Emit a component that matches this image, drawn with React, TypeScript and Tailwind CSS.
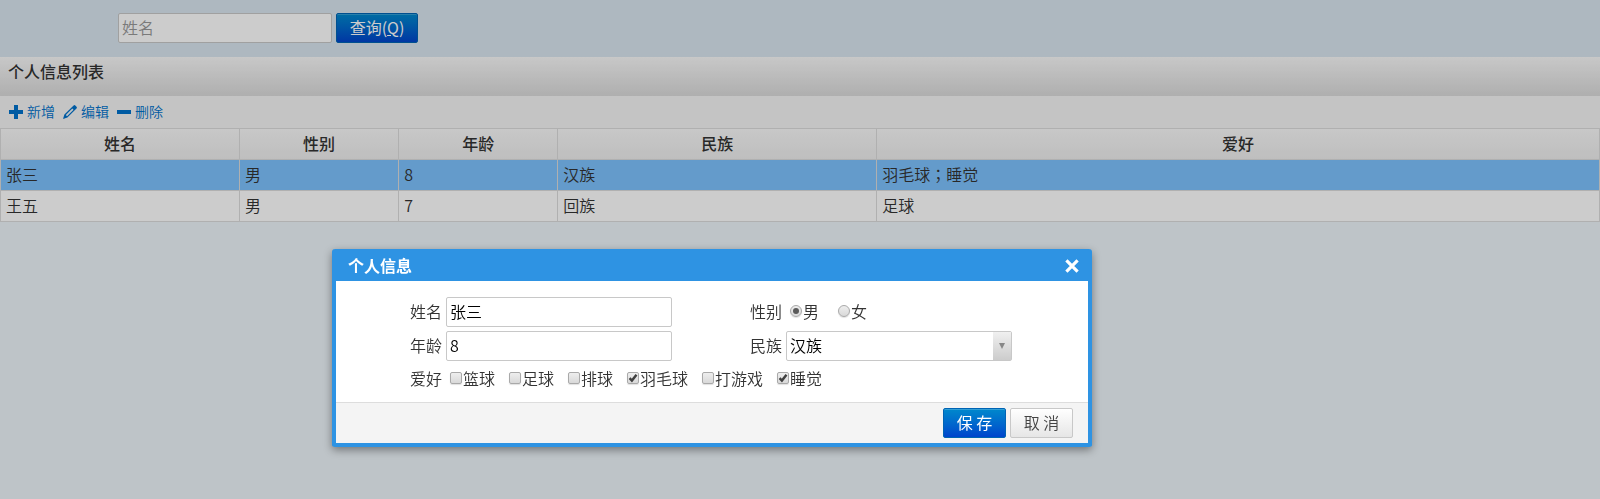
import { Fragment, useState } from "react";
import type { ReactNode } from "react";

type Person = {
  name: string;
  gender: string;
  age: number;
  nation: string;
  hobbies: string[];
};

const people: Person[] = [
  { name: "张三", gender: "男", age: 8, nation: "汉族", hobbies: ["羽毛球", "睡觉"] },
  { name: "王五", gender: "男", age: 7, nation: "回族", hobbies: ["足球"] },
];

const hobbyOptions = ["篮球", "足球", "排球", "羽毛球", "打游戏", "睡觉"];

const columns = [
  { title: "姓名", width: "w-[14.95%]" },
  { title: "性别", width: "w-[9.95%]" },
  { title: "年龄", width: "w-[9.95%]" },
  { title: "民族", width: "w-[19.95%]" },
  { title: "爱好", width: "w-auto" },
];

const fieldClass =
  "h-[30px] w-full rounded-[2px] border border-[#c8c8c8] bg-white px-[3px] pb-0.5 text-base text-black outline-none";

const primaryClass =
  "h-[30px] rounded-[2px] border border-[#0064b4] bg-linear-to-b from-[#0088cc] to-[#0044cc] pb-0.5 text-base leading-6 font-normal text-white shadow-[inset_0_1px_0_rgba(255,255,255,0.2)]";

function ToolButton({ label, children }: { label: string; children: ReactNode }) {
  return (
    <button type="button" className="flex items-center gap-1 text-sm font-[350] text-[#0072cc]">
      <svg viewBox="0 0 14 14" className="size-3.5" fill="currentColor" aria-hidden="true">
        {children}
      </svg>
      <span className="pb-0.5">{label}</span>
    </button>
  );
}

function Choice({
  type,
  name,
  label,
  checked,
  onChange,
}: {
  type: "checkbox" | "radio";
  name: string;
  label: string;
  checked: boolean;
  onChange: () => void;
}) {
  const round = type === "radio" ? "rounded-full" : "rounded-[2px]";
  return (
    <label className="flex items-center gap-px">
      <span className="relative flex">
        <input
          type={type}
          name={name}
          checked={checked}
          onChange={onChange}
          className={`size-3 appearance-none border border-[#a9a9a9] bg-linear-to-b from-[#eeeeee] to-[#d9d9d9] shadow-[0_1px_1px_rgba(0,0,0,0.12)] ${round}`}
        />
        {checked && (
          <svg viewBox="0 0 12 12" className="pointer-events-none absolute inset-0 size-3" aria-hidden="true">
            {type === "radio" ? (
              <circle cx="6" cy="6" r="3" fill="#5a5a5a" />
            ) : (
              <path d="M2.6 6.2 4.9 8.6 9.5 2.8" fill="none" stroke="#404040" strokeWidth="2.4" />
            )}
          </svg>
        )}
      </span>
      <span className="pb-px">{label}</span>
    </label>
  );
}

// The traditional glyph centres the separator between two items.
function HobbyList({ hobbies }: { hobbies: string[] }) {
  return hobbies.map((h, i) => (
    <Fragment key={h}>
      {i > 0 && (
        <span lang="zh-TW" className="font-['Noto_Sans_CJK_TC',sans-serif]">
          ；
        </span>
      )}
      {h}
    </Fragment>
  ));
}

export default function App() {
  const [name, setName] = useState("张三");
  const [age, setAge] = useState("8");
  const [gender, setGender] = useState("男");
  const [nation, setNation] = useState("汉族");
  const [hobbies, setHobbies] = useState(["羽毛球", "睡觉"]);

  const toggleHobby = (hobby: string) =>
    setHobbies((list) => (list.includes(hobby) ? list.filter((h) => h !== hobby) : [...list, hobby]));

  return (
    <div
      lang="zh-CN"
      className="min-h-screen bg-[#eef5fb] font-['Noto_Sans_CJK_SC',sans-serif] text-base leading-6 font-[350] text-[#333333]"
    >
      <form className="flex gap-1 bg-[#dae6f1] pt-[13px] pb-3.5 pl-[118px]" onSubmit={(e) => e.preventDefault()}>
        <input
          type="text"
          aria-label="姓名"
          placeholder="姓名"
          className="h-[30px] w-[214px] rounded-[2px] border border-[#c8c8c8] bg-white px-[3px] pb-0.5 text-base placeholder:text-[#999999]"
        />
        <button type="submit" accessKey="q" className={`${primaryClass} w-[82px]`}>
          查询(<u>Q</u>)
        </button>
      </form>

      <main>
        <h1 className="h-[39px] bg-linear-to-b from-[#fafafa] to-[#dbdbdb] px-2 pt-0.5 font-medium">个人信息列表</h1>
        <div className="flex h-8 items-center gap-2 bg-[#f5f5f5] px-[9px]">
          <ToolButton label="新增">
            <path d="M5 0h4v5h5v4H9v5H5V9H0V5h5z" />
          </ToolButton>
          <ToolButton label="编辑">
            <path
              fillRule="evenodd"
              d="M10.6.5a1.2 1.2 0 0 1 1.7 0l1.2 1.2a1.2 1.2 0 0 1 0 1.7L4.4 12.6 0 14l1.4-4.4zM9.3 3.5 2.8 10l1.2 1.2 6.5-6.5z"
            />
          </ToolButton>
          <ToolButton label="删除">
            <path d="M0 5h14v4H0z" />
          </ToolButton>
        </div>
        <table className="w-full table-fixed border-collapse border border-[#dcdcdc]">
          <thead>
            <tr className="h-[31px] bg-linear-to-b from-[#fafafa] to-[#eeeeee]">
              {columns.map((c) => (
                <th key={c.title} className={`border border-[#dcdcdc] px-0 pt-0 pb-[3px] font-medium ${c.width}`}>
                  {c.title}
                </th>
              ))}
            </tr>
          </thead>
          <tbody>
            {people.map((p, i) => (
              <tr key={p.name} className={i === 0 ? "h-[31px] bg-[#7ec2fe]" : "h-[31px] bg-white"}>
                {[p.name, p.gender, p.age, p.nation, <HobbyList hobbies={p.hobbies} />].map((cell, j) => (
                  <td key={j} className="border border-[#dcdcdc] px-[5px] pt-0 pb-[3px]">
                    {cell}
                  </td>
                ))}
              </tr>
            ))}
          </tbody>
        </table>
      </main>

      <div className="fixed inset-0 bg-black/20" />

      <form
        role="dialog"
        aria-labelledby="dialog-title"
        className="absolute top-[249px] left-[332px] w-[760px] rounded-[3px] border-4 border-t-0 border-[#2e93e3] bg-white shadow-[0_3px_8px_rgba(0,0,0,0.4)]"
        onSubmit={(e) => e.preventDefault()}
      >
        <header className="flex h-8 items-center justify-between bg-[#2e93e3] pr-[9px] pl-3 text-white">
          <h2 id="dialog-title" className="font-bold">
            个人信息
          </h2>
          <button type="button" aria-label="关闭" className="pt-0.5">
            <svg viewBox="0 0 14 14" className="size-3.5" fill="none" stroke="currentColor" strokeWidth="3.2" aria-hidden="true">
              <path d="M1.4 1.4l11.2 11.2M12.6 1.4 1.4 12.6" />
            </svg>
          </button>
        </header>

        <div className="grid grid-cols-[106px_226px_106px_226px] items-center gap-1 pt-4 pb-[11px]">
          <label htmlFor="name" className="pb-0.5 text-right">
            姓名
          </label>
          <input id="name" type="text" className={fieldClass} value={name} onChange={(e) => setName(e.target.value)} />
          <span id="gender-label" className="pb-0.5 text-right">
            性别
          </span>
          <div role="radiogroup" aria-labelledby="gender-label" className="flex gap-[19px] pb-0.5 pl-1">
            {["男", "女"].map((g) => (
              <Choice key={g} type="radio" name="gender" label={g} checked={gender === g} onChange={() => setGender(g)} />
            ))}
          </div>

          <label htmlFor="age" className="pb-0.5 text-right">
            年龄
          </label>
          <input id="age" type="text" className={fieldClass} value={age} onChange={(e) => setAge(e.target.value)} />
          <label htmlFor="nation" className="pb-0.5 text-right">
            民族
          </label>
          <div className="relative">
            <select
              id="nation"
              className={`${fieldClass} appearance-none`}
              value={nation}
              onChange={(e) => setNation(e.target.value)}
            >
              <option>汉族</option>
              <option>回族</option>
            </select>
            <span className="pointer-events-none absolute inset-y-px right-px flex w-[18px] items-center justify-center bg-linear-to-b from-[#f0f0f0] to-[#cccccc]">
              <svg viewBox="0 0 6 6" className="size-1.5" fill="#888888" aria-hidden="true">
                <path d="M0 0h6L3 6z" />
              </svg>
            </span>
          </div>

          <span id="hobby-label" className="text-right">
            爱好
          </span>
          <div role="group" aria-labelledby="hobby-label" className="col-span-3 flex h-[26px] items-center gap-3.5 pl-1">
            {hobbyOptions.map((h) => (
              <Choice
                key={h}
                type="checkbox"
                name="hobby"
                label={h}
                checked={hobbies.includes(h)}
                onChange={() => toggleHobby(h)}
              />
            ))}
          </div>
        </div>

        <footer className="flex justify-end gap-1 border-t border-[#dddddd] bg-[#f4f4f4] py-[5px] pr-[15px]">
          <button type="submit" className={`${primaryClass} w-[63px]`}>
            保 存
          </button>
          <button
            type="button"
            className="h-[30px] w-[63px] rounded-[2px] border border-[#c8c8c8] bg-linear-to-b from-white to-[#e6e6e6] pb-0.5 text-base leading-6 text-[#444444]"
          >
            取 消
          </button>
        </footer>
      </form>
    </div>
  );
}
